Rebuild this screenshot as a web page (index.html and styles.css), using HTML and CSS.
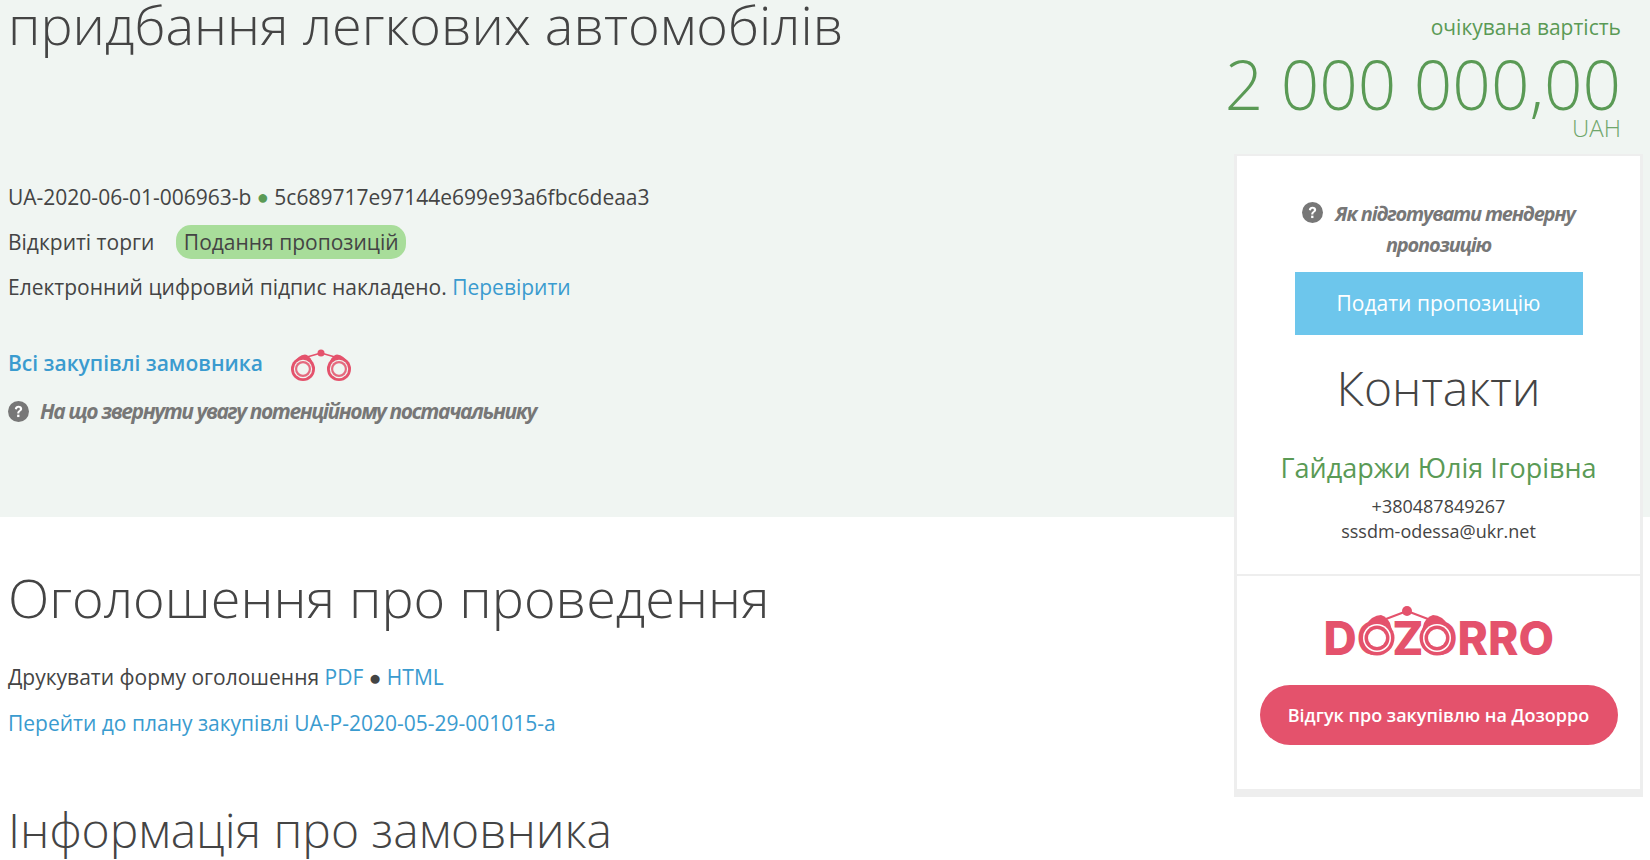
FILE: index.html
```html
<!DOCTYPE html>
<html>
<head>
    <title>Придбання легкових автомобілів</title>
    <link rel="stylesheet" href="styles.css">
</head>
<body>
    <svg class="defs" width="0" height="0">
        <symbol id="binoculars" viewBox="0 0 62 32">
            <path d="M31 4 L17 8 M31 4 L45 8" fill="none" stroke="currentColor" stroke-width="1.600"/>
            <circle cx="31" cy="4" r="3.500" fill="currentColor"/>
            <path d="M4 14 Q8 6 15 5.500 Q19 6 22 12 L25 20 L2 20 Z" fill="currentColor"/>
            <path d="M58 14 Q54 6 47 5.500 Q43 6 40 12 L37 20 L60 20 Z" fill="currentColor"/>
            <g fill="currentColor">
                <circle cx="13" cy="20" r="12"/>
                <circle cx="49" cy="20" r="12"/>
            </g>
            <g fill="var(--lens)">
                <circle cx="13" cy="20" r="9.200"/>
                <circle cx="49" cy="20" r="9.200"/>
            </g>
            <g fill="currentColor" opacity="0.85">
                <circle cx="13" cy="20" r="8"/>
                <circle cx="49" cy="20" r="8"/>
            </g>
            <g fill="var(--lens)">
                <circle cx="13" cy="20" r="5.800"/>
                <circle cx="49" cy="20" r="5.800"/>
            </g>
        </symbol>
        <symbol id="logo-binoculars" viewBox="0 0 96 50">
            <path d="M48 5 L27 13 M48 5 L69 13" fill="none" stroke="currentColor" stroke-width="2"/>
            <circle cx="48" cy="5" r="5" fill="currentColor"/>
            <path d="M6 20 Q13 9 22 9 Q28 11 31 17 L34 28 L4 28 Z" fill="currentColor"/>
            <path d="M90 20 Q83 9 74 9 Q68 11 65 17 L62 28 L92 28 Z" fill="currentColor"/>
            <g fill="currentColor">
                <circle cx="18" cy="32" r="17.500"/>
                <circle cx="78" cy="32" r="17.500"/>
            </g>
            <g fill="var(--lens)">
                <circle cx="18" cy="32" r="14"/>
                <circle cx="78" cy="32" r="14"/>
            </g>
            <g fill="currentColor">
                <circle cx="18" cy="32" r="12.500"/>
                <circle cx="78" cy="32" r="12.500"/>
            </g>
            <g fill="var(--lens)">
                <circle cx="18" cy="32" r="9"/>
                <circle cx="78" cy="32" r="9"/>
            </g>
        </symbol>
        <symbol id="question" viewBox="0 0 20 20">
            <circle cx="10" cy="10" r="10" fill="currentColor"/>
            <path d="M6.500 7.500 C6.700 5.500 8.200 4.500 10 4.500 C12 4.500 13.500 5.700 13.500 7.400 C13.500 9.800 10.800 9.700 10.800 11.800 L8.800 11.800 C8.800 8.800 11.300 8.900 11.300 7.500 C11.300 6.800 10.800 6.400 10 6.400 C9.200 6.400 8.700 6.900 8.500 8 Z" fill="#fff"/>
            <rect x="8.700" y="13" width="2.200" height="2.300" fill="#fff"/>
        </symbol>
    </svg>

    <div class="page">
        <main class="content">
            <h1 class="title">придбання легкових автомобілів</h1>
            <section class="tender-info">
                <p>UA-2020-06-01-006963-b <span class="dot-green">●</span> 5c689717e97144e699e93a6fbc6deaa3</p>
                <p>Відкриті торги <span class="status">Подання пропозицій</span></p>
                <p>Електронний цифровий підпис накладено. <a href="#">Перевірити</a></p>
                <p class="buyer-row">
                    <a href="#" class="buyer-link">Всі закупівлі замовника</a>
                    <svg class="buyer-icon"><use href="#binoculars"/></svg>
                </p>
                <p class="hint">
                    <svg class="hint-icon"><use href="#question"/></svg>
                    <span>На що звернути увагу потенційному постачальнику</span>
                </p>
            </section>
            <section class="notice">
                <h2 class="notice-title">Оголошення про проведення</h2>
                <p>Друкувати форму оголошення <a href="#">PDF</a> ● <a href="#">HTML</a></p>
                <p><a href="#">Перейти до плану закупівлі UA-P-2020-05-29-001015-a</a></p>
                <h2 class="buyer-title">Інформація про замовника</h2>
            </section>
        </main>

        <aside class="side">
            <div class="price">
                <div class="price-label">очікувана вартість</div>
                <div class="price-value">2 000 000,00</div>
                <div class="price-currency">UAH</div>
            </div>
            <div class="card">
                <div class="card-top">
                    <p class="card-hint">
                        <svg class="hint-icon"><use href="#question"/></svg>
                        <span>Як підготувати тендерну пропозицію</span>
                    </p>
                    <a href="#" class="btn-submit">Подати пропозицію</a>
                    <h3 class="contacts-title">Контакти</h3>
                    <div class="contact-name">Гайдаржи Юлія Ігорівна</div>
                    <div class="contact-line">+380487849267</div>
                    <div class="contact-line">sssdm-odessa@ukr.net</div>
                </div>
                <div class="card-bottom">
                    <div class="logo">
                        <span class="logo-text">DOZORRO</span>
                        <svg class="logo-icon"><use href="#logo-binoculars"/></svg>
                    </div>
                    <a href="#" class="btn-dozorro">Відгук про закупівлю на Дозорро</a>
                </div>
            </div>
        </aside>
    </div>
</body>
</html>
```

FILE: styles.css
```css
html, body {
    margin: 0;
    height: 860px;
    overflow: hidden;
}
body {
    font-family: "Open Sans", sans-serif;
    font-size: 21px;
    color: #444;
    background-color: #fff;
}
a {
    color: #3a9bcf;
    text-decoration: none;
}
p {
    margin: 0;
}
.defs {
    display: block;
    height: 0;
}
.page {
    display: grid;
    grid-template-columns: 1fr 416px;
    background: linear-gradient(#f0f5f2 517px, #fff 517px);
}
.content {
    padding-left: 8px;
    min-width: 0;
}
.title {
    margin: -3px 0 0;
    font-size: 54px;
    font-weight: 300;
    line-height: 54px;
    color: #444;
}
.tender-info {
    height: 465px;
    padding-top: 123px;
    box-sizing: border-box;
}
.tender-info p {
    line-height: 45px;
}
.dot-green {
    color: #5a9a55;
    font-size: 20px;
    vertical-align: 1px;
}
.status {
    margin-left: 16px;
    padding: 3px 7px 3px 8px;
    border-radius: 15px;
    background-color: #a8dd9a;
}
.buyer-row {
    display: flex;
    align-items: center;
    margin-top: 31px;
}
.buyer-link {
    font-weight: 600;
}
.buyer-icon {
    width: 62px;
    height: 32px;
    margin: 3px 0 0 27px;
    color: #e4526c;
    --lens: #f0f5f2;
}
.hint {
    display: flex;
    align-items: center;
    gap: 11px;
    margin-top: 3px;
    color: #777;
    font-style: italic;
    font-weight: 700;
    letter-spacing: -1.43px;
}
.hint-icon {
    width: 21px;
    height: 21px;
    color: #777;
    flex: none;
}
.notice-title {
    margin: 47px 0 0;
    font-size: 54px;
    font-weight: 300;
    line-height: 68px;
}
.notice p {
    line-height: 46px;
}
.notice-title + p {
    margin-top: 23px;
}
.buyer-title {
    margin: 53px 0 0;
    font-size: 48px;
    font-weight: 300;
    line-height: 62px;
}
.side {
    padding-right: 7px;
    min-width: 0;
}
.price {
    text-align: right;
    padding-right: 22px;
    color: #5a9a55;
}
.price-label {
    margin-top: 14px;
    line-height: 27px;
}
.price-value {
    display: flex;
    justify-content: flex-end;
    margin-top: 1px;
    font-size: 67.5px;
    font-weight: 300;
    line-height: 84px;
    white-space: nowrap;
}
.price-currency {
    margin: -7px 0 17px;
    font-size: 24px;
    font-weight: 300;
    line-height: 18px;
    color: #6fa66b;
}
.card {
    width: 409px;
    box-sizing: border-box;
    border: 3px solid #eee;
    border-top-width: 2px;
    border-bottom-width: 8px;
    background-color: #fff;
    text-align: center;
}
.card-top {
    height: 420px;
    box-sizing: border-box;
    padding-top: 42px;
    border-bottom: 2px solid #eee;
}
.card-hint {
    padding: 0 40px;
    color: #777;
    font-size: 20px;
    font-style: italic;
    font-weight: 700;
    letter-spacing: -1.2px;
    line-height: 31px;
}
.card-hint .hint-icon {
    margin-right: 8px;
    vertical-align: -2px;
}
.btn-submit {
    display: block;
    width: 288px;
    margin: 12px auto 0;
    background-color: #6dc6ec;
    color: #fff;
    line-height: 63px;
}
.contacts-title {
    margin: 18px 0 0;
    font-size: 48px;
    font-weight: 300;
    line-height: 70px;
}
.contact-name {
    margin-top: 25px;
    font-size: 27px;
    color: #5a9a55;
    line-height: 40px;
}
.contact-line {
    font-size: 18px;
    line-height: 25px;
}
.contact-name + .contact-line {
    margin-top: 6px;
}
.card-bottom {
    height: 213px;
    box-sizing: border-box;
    padding-top: 29px;
}
.logo {
    position: relative;
    width: 228px;
    height: 50px;
    margin: 0 auto;
    color: #e4526c;
}
.logo-text {
    display: block;
    margin-left: -1px;
    padding-top: 8px;
    font-family: "Inter", sans-serif;
    font-size: 46px;
    font-weight: 800;
    line-height: 50px;
    letter-spacing: 0;
    white-space: nowrap;
}
.logo-icon {
    position: absolute;
    left: 34px;
    top: 1px;
    width: 96px;
    height: 50px;
    color: #e4526c;
    --lens: #fff;
}
.btn-dozorro {
    display: block;
    width: 358px;
    margin: 30px auto 0;
    border-radius: 30px;
    background-color: #e4526c;
    color: #fff;
    font-size: 18px;
    font-weight: 600;
    line-height: 60px;
}
```
